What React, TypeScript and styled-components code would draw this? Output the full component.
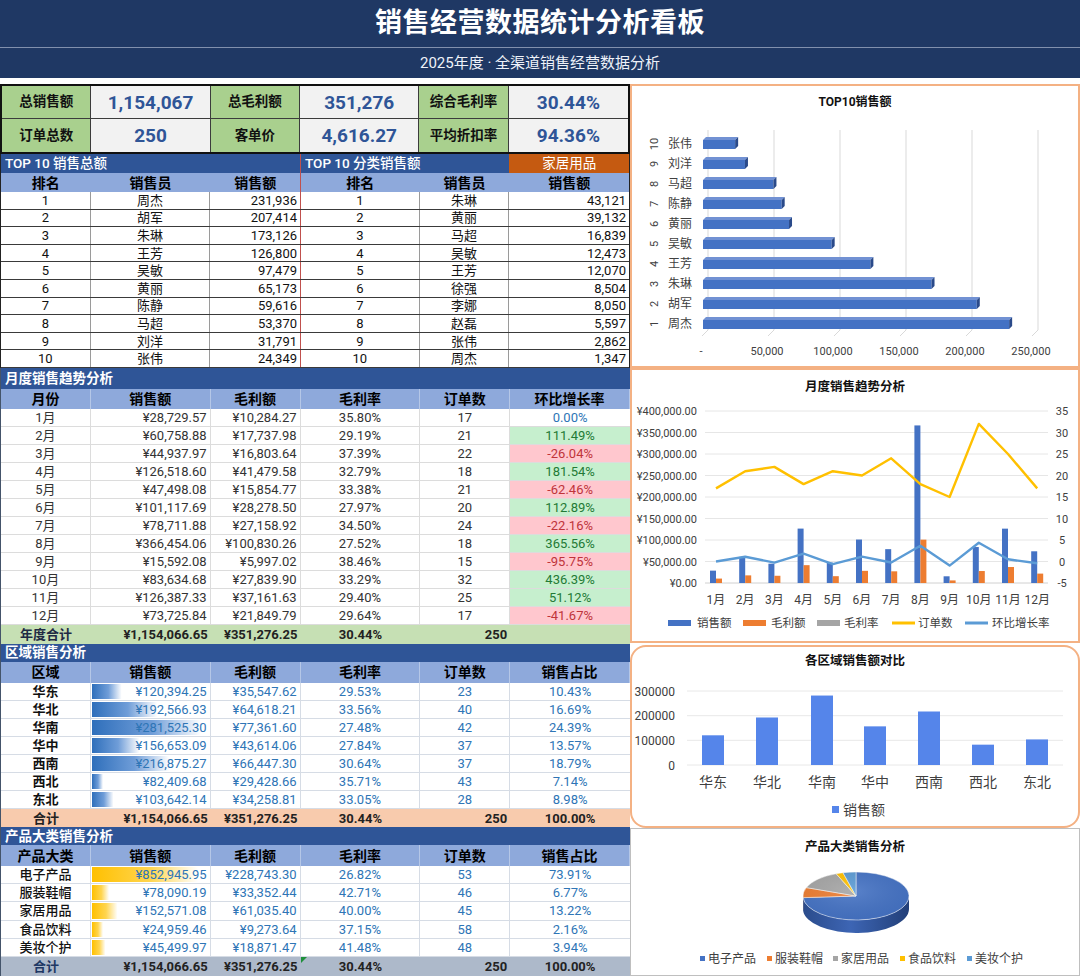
import React from "react";
import styled, { createGlobalStyle } from "styled-components";

const FONT = `Roboto, "Noto Sans CJK SC", "Noto Sans", sans-serif`;
const COLS = "90fr 120fr 90fr 120fr 90fr 120fr";

type Align = "left" | "center" | "right";
type Tone = "up" | "down" | "flat";
const JUSTIFY: Record<Align, string> = { left: "flex-start", center: "center", right: "flex-end" };

const GlobalStyle = createGlobalStyle`
  html, body { margin: 0; padding: 0; background: #ffffff; }
  body { font-family: ${FONT}; -webkit-font-smoothing: antialiased; }
  *, *::before, *::after { box-sizing: border-box; }
`;

/* ---------- page layout ---------- */
const Page = styled.div`
  width: 1080px;
  height: 976px;
  overflow: hidden;
  background: #fff;
  display: flex;
  flex-direction: column;
  font-family: ${FONT};
`;
const TitleBar = styled.header`
  flex: 0 0 48px;
  display: flex;
  align-items: center;
  justify-content: center;
  background: #1f3864;
  color: #ffffff;
  font-size: 27px;
  font-weight: 700;
  letter-spacing: 0.5px;
  line-height: 1;
  border-bottom: 1px solid #8190ad;
`;
const SubtitleBar = styled.div`
  flex: 0 0 30px;
  display: flex;
  align-items: center;
  justify-content: center;
  background: #1f3864;
  color: #eef2f9;
  font-size: 15px;
  line-height: 1;
`;
const Board = styled.main`
  flex: 1;
  min-height: 0;
  margin-top: 6px;
  display: grid;
  grid-template-columns: 630px 450px;
`;
const LeftColumn = styled.section`
  display: flex;
  flex-direction: column;
  min-width: 0;
`;
const RightColumn = styled.section`
  display: flex;
  flex-direction: column;
  min-width: 0;
`;

/* ---------- KPI ---------- */
const KpiGrid = styled.div`
  flex: 0 0 70px;
  display: grid;
  grid-template-columns: ${COLS};
  grid-template-rows: 1fr 1fr;
  border: 2px solid #111;
`;
const KpiLabel = styled.div<{ $top?: boolean }>`
  display: flex;
  align-items: center;
  justify-content: center;
  background: #a9d08e;
  color: #111;
  font-size: 13.5px;
  font-weight: 700;
  line-height: 1;
  border-right: 1px solid #3c3c3c;
  border-bottom: ${p => (p.$top ? "1px solid #3c3c3c" : "none")};
`;
const KpiValue = styled(KpiLabel)`
  background: #f2f2f2;
  color: #2f5597;
  font-size: 19px;
  &:nth-child(6n) { border-right: none; }
`;

/* ---------- tables ---------- */
const TableBlock = styled.div<{ $frame: string; $rightFrame?: string }>`
  display: flex;
  flex-direction: column;
  border-left: 1px solid ${p => p.$frame};
  border-right: ${p => (p.$rightFrame ? `1px solid ${p.$rightFrame}` : "none")};
`;
const TableRow = styled.div<{ $h: number; $bg?: string; $line?: string }>`
  flex: 0 0 ${p => p.$h}px;
  height: ${p => p.$h}px;
  display: grid;
  grid-template-columns: ${COLS};
  background: ${p => p.$bg ?? "#ffffff"};
  border-bottom: ${p => (p.$line ? `1px solid ${p.$line}` : "none")};
`;
const CellBase = styled.div<{ $align?: Align; $span?: number; $edge?: string; $lead?: string }>`
  grid-column: span ${p => p.$span ?? 1};
  min-width: 0;
  position: relative;
  display: flex;
  align-items: center;
  justify-content: ${p => JUSTIFY[p.$align ?? "center"]};
  padding: 0 ${p => (p.$align === "right" ? 3 : 4)}px;
  border-right: ${p => (p.$edge ? `1px solid ${p.$edge}` : "none")};
  border-left: ${p => (p.$lead ? `1px solid ${p.$lead}` : "none")};
  white-space: nowrap;
  line-height: 1;
`;
const BandCell = styled(CellBase)<{ $fill?: string; $weight?: number }>`
  background: ${p => p.$fill ?? "transparent"};
  color: #ffffff;
  font-size: 13.5px;
  font-weight: ${p => p.$weight ?? 700};
`;
const HeadCell = styled(CellBase)`
  color: #000;
  font-size: 14px;
  font-weight: 700;
`;
const DataCell = styled(CellBase)<{ $color?: string; $weight?: number }>`
  color: ${p => p.$color ?? "#111"};
  font-size: 13px;
  font-weight: ${p => p.$weight ?? 400};
`;
const BarCell = styled(DataCell)<{ $bar: string }>`
  background-image: linear-gradient(90deg, ${p => p.$bar});
  background-repeat: no-repeat;
  background-position: 1px center;
`;
const GrowthCell = styled(CellBase)<{ $tone: Tone }>`
  font-size: 13px;
  background: ${p => (p.$tone === "up" ? "#c6efce" : p.$tone === "down" ? "#ffc7ce" : "transparent")};
  color: ${p => (p.$tone === "up" ? "#237a35" : p.$tone === "down" ? "#c0343a" : "#2e75b6")};
`;
const TotalCell = styled(CellBase)<{ $color?: string }>`
  color: ${p => p.$color ?? "#222"};
  font-size: 13px;
  font-weight: 700;
`;
const ErrorMark = styled.span`
  position: absolute;
  top: 0;
  left: 0;
  width: 0;
  height: 0;
  border-top: 6px solid #1e8f3a;
  border-right: 6px solid transparent;
`;

/* ---------- charts ---------- */
const ChartFrame = styled.div<{ $h: number; $edge: string; $stroke?: number; $radius?: number; $gap?: number }>`
  flex: 0 0 ${p => p.$h}px;
  height: ${p => p.$h}px;
  margin-top: ${p => p.$gap ?? 0}px;
  background: #ffffff;
  border-radius: ${p => p.$radius ?? 0}px;
  box-shadow: inset 0 0 0 ${p => p.$stroke ?? 2}px ${p => p.$edge};
  overflow: hidden;
`;
const ChartSvg = styled.svg`
  display: block;
  width: 100%;
  height: 100%;
  font-family: ${FONT};
`;

/* ---------- data ---------- */
const topSales: [string, string, string][] = [
  ["1", "周杰", "231,936"], ["2", "胡军", "207,414"], ["3", "朱琳", "173,126"], ["4", "王芳", "126,800"],
  ["5", "吴敏", "97,479"], ["6", "黄丽", "65,173"], ["7", "陈静", "59,616"], ["8", "马超", "53,370"],
  ["9", "刘洋", "31,791"], ["10", "张伟", "24,349"],
];
const topCategory: [string, string, string][] = [
  ["1", "朱琳", "43,121"], ["2", "黄丽", "39,132"], ["3", "马超", "16,839"], ["4", "吴敏", "12,473"],
  ["5", "王芳", "12,070"], ["6", "徐强", "8,504"], ["7", "李娜", "8,050"], ["8", "赵磊", "5,597"],
  ["9", "张伟", "2,862"], ["10", "周杰", "1,347"],
];
const topBars: [string, number][] = [
  ["张伟", 24349], ["刘洋", 31791], ["马超", 53370], ["陈静", 59616], ["黄丽", 65173],
  ["吴敏", 97479], ["王芳", 126800], ["朱琳", 173126], ["胡军", 207414], ["周杰", 231936],
];

const mSales = [28729.57, 60758.88, 44937.97, 126518.6, 47498.08, 101117.69, 78711.88, 366454.06, 15592.08, 83634.68, 126387.33, 73725.84];
const mProfit = [10284.27, 17737.98, 16803.64, 41479.58, 15854.77, 28278.5, 27158.92, 100830.26, 5997.02, 27839.9, 37161.63, 21849.79];
const mRate = [35.8, 29.19, 37.39, 32.79, 33.38, 27.97, 34.5, 27.52, 38.46, 33.29, 29.4, 29.64];
const mOrders = [17, 21, 22, 18, 21, 20, 24, 18, 15, 32, 25, 17];
const mGrowth = [0, 111.49, -26.04, 181.54, -62.46, 112.89, -22.16, 365.56, -95.75, 436.39, 51.12, -41.67];

const regions: [string, number, number, number, number, number][] = [
  ["华东", 120394.25, 35547.62, 29.53, 23, 10.43],
  ["华北", 192566.93, 64618.21, 33.56, 40, 16.69],
  ["华南", 281525.3, 77361.6, 27.48, 42, 24.39],
  ["华中", 156653.09, 43614.06, 27.84, 37, 13.57],
  ["西南", 216875.27, 66447.3, 30.64, 37, 18.79],
  ["西北", 82409.68, 29428.66, 35.71, 43, 7.14],
  ["东北", 103642.14, 34258.81, 33.05, 28, 8.98],
];
const products: [string, number, number, number, number, number][] = [
  ["电子产品", 852945.95, 228743.3, 26.82, 53, 73.91],
  ["服装鞋帽", 78090.19, 33352.44, 42.71, 46, 6.77],
  ["家居用品", 152571.08, 61035.4, 40.0, 45, 13.22],
  ["食品饮料", 24959.46, 9273.64, 37.15, 58, 2.16],
  ["美妆个护", 45499.97, 18871.47, 41.48, 48, 3.94],
];

const money = (v: number) =>
  "¥" + v.toLocaleString("en-US", { minimumFractionDigits: 2, maximumFractionDigits: 2 });
const pct = (v: number) => v.toFixed(2) + "%";

const barWidth = (v: number, min: number, max: number, span: number) => 11 + ((v - min) * span) / (max - min);

/* ---------- left tables ---------- */
function KpiPanel() {
  const kpis: [string, string][][] = [
    [["总销售额", "1,154,067"], ["总毛利额", "351,276"], ["综合毛利率", "30.44%"]],
    [["订单总数", "250"], ["客单价", "4,616.27"], ["平均折扣率", "94.36%"]],
  ];
  return (
    <KpiGrid>
      {kpis.map((row, r) =>
        row.map(([label, value]) => (
          <React.Fragment key={label}>
            <KpiLabel $top={r === 0}>{label}</KpiLabel>
            <KpiValue $top={r === 0}>{value}</KpiValue>
          </React.Fragment>
        ))
      )}
    </KpiGrid>
  );
}

const RED = "#c0504d";

function TopTenTables() {
  return (
    <TableBlock $frame="#222" $rightFrame="#222">
      <TableRow $h={19} $bg="#2f5597">
        <BandCell $span={3} $align="left" $weight={500}>TOP 10 销售总额</BandCell>
        <BandCell $span={2} $align="left" $weight={500} $lead={RED}>TOP 10 分类销售额</BandCell>
        <BandCell $fill="#c55a11" $weight={400}>家居用品</BandCell>
      </TableRow>
      <TableRow $h={19} $bg="#8ea9db">
        <HeadCell>排名</HeadCell>
        <HeadCell>销售员</HeadCell>
        <HeadCell>销售额</HeadCell>
        <HeadCell $lead={RED}>排名</HeadCell>
        <HeadCell>销售员</HeadCell>
        <HeadCell>销售额</HeadCell>
      </TableRow>
      {topSales.map((left, i) => {
        const right = topCategory[i];
        return (
          <TableRow key={left[0]} $h={17.6} $line="#3a3a3a">
            <DataCell $edge="#9a9a9a">{left[0]}</DataCell>
            <DataCell $edge="#9a9a9a">{left[1]}</DataCell>
            <DataCell $align="right">{left[2]}</DataCell>
            <DataCell $lead={RED} $edge="#9a9a9a">{right[0]}</DataCell>
            <DataCell $edge="#9a9a9a">{right[1]}</DataCell>
            <DataCell $align="right">{right[2]}</DataCell>
          </TableRow>
        );
      })}
    </TableBlock>
  );
}

const HEAD_EDGE = "rgba(255,255,255,0.35)";

function MonthTable() {
  const heads = ["月份", "销售额", "毛利额", "毛利率", "订单数", "环比增长率"];
  return (
    <TableBlock $frame="#44546a">
      <TableRow $h={21} $bg="#2f5597">
        <BandCell $span={6} $align="left">月度销售趋势分析</BandCell>
      </TableRow>
      <TableRow $h={20} $bg="#8ea9db">
        {heads.map(h => (
          <HeadCell key={h} $edge={HEAD_EDGE}>{h}</HeadCell>
        ))}
      </TableRow>
      {mSales.map((s, i) => {
        const g = mGrowth[i];
        const tone: Tone = g > 0 ? "up" : g < 0 ? "down" : "flat";
        return (
          <TableRow key={i} $h={18} $line="#dcdcdc">
            <DataCell $color="#333" $edge="#dcdcdc">{i + 1}月</DataCell>
            <DataCell $color="#333" $edge="#dcdcdc" $align="right">{money(s)}</DataCell>
            <DataCell $color="#333" $edge="#dcdcdc" $align="right">{money(mProfit[i])}</DataCell>
            <DataCell $color="#333" $edge="#dcdcdc">{pct(mRate[i])}</DataCell>
            <DataCell $color="#333" $edge="#dcdcdc">{mOrders[i]}</DataCell>
            <GrowthCell $tone={tone}>{pct(g)}</GrowthCell>
          </TableRow>
        );
      })}
      <TableRow $h={19} $bg="#c6e0b4">
        <TotalCell $color="#1f2a44">年度合计</TotalCell>
        <TotalCell $align="right">¥1,154,066.65</TotalCell>
        <TotalCell $align="right">¥351,276.25</TotalCell>
        <TotalCell>30.44%</TotalCell>
        <TotalCell $align="right">250</TotalCell>
        <TotalCell />
      </TableRow>
    </TableBlock>
  );
}

function ShareTable(props: {
  title: string;
  first: string;
  rows: [string, number, number, number, number, number][];
  bar: string;
  barSpan: number;
  nameWeight: number;
  totalBg: string;
  totalNameColor: string;
  bandH: number;
  headH: number;
  rowH: number;
  totalH: number;
  flag?: boolean;
}) {
  const { rows } = props;
  const vals = rows.map(r => r[1]);
  const min = Math.min(...vals);
  const max = Math.max(...vals);
  const heads = [props.first, "销售额", "毛利额", "毛利率", "订单数", "销售占比"];
  const BLUE = "#2e75b6";
  const EDGE = "#d6dce5";
  return (
    <TableBlock $frame="#44546a">
      <TableRow $h={props.bandH} $bg="#2f5597">
        <BandCell $span={6} $align="left">{props.title}</BandCell>
      </TableRow>
      <TableRow $h={props.headH} $bg="#8ea9db">
        {heads.map(h => (
          <HeadCell key={h} $edge={HEAD_EDGE}>{h}</HeadCell>
        ))}
      </TableRow>
      {rows.map(r => (
        <TableRow key={r[0]} $h={props.rowH} $line={EDGE}>
          <DataCell $weight={props.nameWeight} $edge={EDGE}>{r[0]}</DataCell>
          <BarCell
            $bar={props.bar}
            $color={BLUE}
            $edge={EDGE}
            $align="right"
            style={{ backgroundSize: `${barWidth(r[1], min, max, props.barSpan).toFixed(1)}px calc(100% - 2px)` }}
          >
            {money(r[1])}
          </BarCell>
          <DataCell $color={BLUE} $edge={EDGE} $align="right">{money(r[2])}</DataCell>
          <DataCell $color={BLUE} $edge={EDGE}>{pct(r[3])}</DataCell>
          <DataCell $color={BLUE} $edge={EDGE}>{r[4]}</DataCell>
          <DataCell $color={BLUE}>{pct(r[5])}</DataCell>
        </TableRow>
      ))}
      <TableRow $h={props.totalH} $bg={props.totalBg}>
        <TotalCell $color={props.totalNameColor}>合计</TotalCell>
        <TotalCell $align="right">¥1,154,066.65</TotalCell>
        <TotalCell $align="right">¥351,276.25</TotalCell>
        <TotalCell>
          {props.flag && <ErrorMark />}
          30.44%
        </TotalCell>
        <TotalCell $align="right">250</TotalCell>
        <TotalCell>100.00%</TotalCell>
      </TableRow>
    </TableBlock>
  );
}

/* ---------- charts ---------- */
const AXIS = "#404040";

function TopTenChart() {
  const grid = [0, 1, 2, 3, 4, 5].map(k => 78 + 66 * k);
  const labels = ["-", "50,000", "100,000", "150,000", "200,000", "250,000"];
  return (
    <ChartSvg viewBox="0 0 450 284">
      <text x={225} y={22} textAnchor="middle" fontSize={12} fontWeight={700} fill="#111">TOP10销售额</text>
      {grid.map(gx => (
        <g key={gx}>
          <line x1={gx} y1={46} x2={gx} y2={246} stroke="#d9d9d9" strokeWidth={1} />
          <line x1={gx} y1={246} x2={gx - 6} y2={252} stroke="#d9d9d9" strokeWidth={1} />
        </g>
      ))}
      {labels.map((t, k) => (
        <text key={t} x={grid[k] - 7} y={271} textAnchor="middle" fontSize={11} fill={AXIS}>{t}</text>
      ))}
      {topBars.map(([name, v], i) => {
        const cy = 60 + 20 * i;
        const x0 = 73;
        const L = (v / 50000) * 66;
        return (
          <g key={name}>
            <polygon
              points={`${x0},${cy - 4} ${x0 + 3},${cy - 7} ${x0 + L + 3},${cy - 7} ${x0 + L},${cy - 4}`}
              fill="#7191d3"
            />
            <rect x={x0} y={cy - 4} width={L} height={9} fill="#4472c4" />
            <polygon
              points={`${x0 + L},${cy - 4} ${x0 + L + 3},${cy - 7} ${x0 + L + 3},${cy + 2} ${x0 + L},${cy + 5}`}
              fill="#2a4a8a"
            />
            <text x={50} y={cy + 4} textAnchor="middle" fontSize={12} fill={AXIS}>{name}</text>
            <text
              transform={`translate(24 ${cy}) rotate(-90)`}
              textAnchor="middle"
              dy={4}
              fontSize={11}
              fill={AXIS}
            >
              {10 - i}
            </text>
          </g>
        );
      })}
    </ChartSvg>
  );
}

function MonthChart() {
  const base = 215;
  const yL = (v: number) => base - (v * 172) / 400000;
  const yR = (v: number) => base - (v + 5) * 4.3;
  const cx = (i: number) => 86 + i * 29.2;
  const leftLabels = ["¥400,000.00", "¥350,000.00", "¥300,000.00", "¥250,000.00", "¥200,000.00", "¥150,000.00", "¥100,000.00", "¥50,000.00", "¥0.00"];
  const rightLabels = ["35", "30", "25", "20", "15", "10", "5", "0", "-5"];
  const orderPts = mOrders.map((v, i) => `${cx(i)},${yR(v)}`).join(" ");
  const growthPts = mGrowth.map((v, i) => `${cx(i)},${yR(v / 100)}`).join(" ");
  const legend: { label: string; color: string; kind: "bar" | "line"; sx: number; tx: number }[] = [
    { label: "销售额", color: "#4472c4", kind: "bar", sx: 38, tx: 67 },
    { label: "毛利额", color: "#ed7d31", kind: "bar", sx: 113, tx: 141 },
    { label: "毛利率", color: "#a5a5a5", kind: "bar", sx: 187, tx: 214 },
    { label: "订单数", color: "#ffc000", kind: "line", sx: 262, tx: 288 },
    { label: "环比增长率", color: "#5b9bd5", kind: "line", sx: 335, tx: 362 },
  ];
  return (
    <ChartSvg viewBox="0 0 450 275">
      <text x={225} y={23} textAnchor="middle" fontSize={12.5} fontWeight={700} fill="#111">月度销售趋势分析</text>
      {leftLabels.map((t, k) => {
        const y = 43 + 21.5 * k;
        return (
          <g key={t}>
            <line x1={75} y1={y} x2={418} y2={y} stroke={k === 8 ? "#d0d0d0" : "#e6e6e6"} strokeWidth={1} />
            <text x={67} y={y + 4} textAnchor="end" fontSize={11} fill={AXIS}>{t}</text>
            <text x={432} y={y + 4} textAnchor="middle" fontSize={11} fill={AXIS}>{rightLabels[k]}</text>
          </g>
        );
      })}
      {mSales.map((s, i) => (
        <g key={i}>
          <rect x={cx(i) - 6} y={yL(s)} width={6} height={base - yL(s)} fill="#4472c4" />
          <rect x={cx(i)} y={yL(mProfit[i])} width={6} height={base - yL(mProfit[i])} fill="#ed7d31" />
          <text x={cx(i)} y={236} textAnchor="middle" fontSize={12} fill={AXIS}>{i + 1}月</text>
        </g>
      ))}
      <polyline points={orderPts} fill="none" stroke="#ffc000" strokeWidth={2.4} strokeLinejoin="round" />
      <polyline points={growthPts} fill="none" stroke="#5b9bd5" strokeWidth={2.4} strokeLinejoin="round" />
      {legend.map(l => (
        <g key={l.label}>
          {l.kind === "bar" ? (
            <rect x={l.sx} y={252} width={23} height={6} fill={l.color} />
          ) : (
            <line x1={l.sx} y1={255} x2={l.sx + 23} y2={255} stroke={l.color} strokeWidth={3} />
          )}
          <text x={l.tx} y={259} fontSize={11.5} fill={AXIS}>{l.label}</text>
        </g>
      ))}
    </ChartSvg>
  );
}

function RegionChart() {
  const centers = [83, 137, 192, 245, 299, 353, 407];
  const y = (v: number) => 120 - (v * 24.67) / 100000;
  const ticks: [string, number][] = [["300000", 46], ["200000", 70.7], ["100000", 95.3], ["0", 120]];
  return (
    <ChartSvg viewBox="0 0 450 183">
      <text x={225} y={20} textAnchor="middle" fontSize={12.5} fontWeight={700} fill="#111">各区域销售额对比</text>
      {ticks.map(([t, ty]) => (
        <g key={t}>
          <line x1={57} y1={ty} x2={433} y2={ty} stroke="#e8e8e8" strokeWidth={1} />
          <text x={45} y={ty + 4.5} textAnchor="end" fontSize={12} fill={AXIS}>{t}</text>
        </g>
      ))}
      {regions.map((r, i) => (
        <g key={r[0]}>
          <rect x={centers[i] - 11} y={y(r[1])} width={22} height={120 - y(r[1])} fill="#5585ea" />
          <text x={centers[i]} y={142} textAnchor="middle" fontSize={14} fill={AXIS}>{r[0]}</text>
        </g>
      ))}
      <rect x={202} y={161} width={7} height={7} fill="#5585ea" />
      <text x={213} y={169.5} fontSize={14} fill={AXIS}>销售额</text>
    </ChartSvg>
  );
}

function PieChart() {
  const cx = 226;
  const cy = 68;
  const rx = 53;
  const ry = 24;
  const depth = 13;
  const colors = ["#4472c4", "#ed7d31", "#a5a5a5", "#ffc000", "#5b9bd5"];
  const sides = ["url(#sideBlue)", "#b45a1f", "#7c7c7c", "#c99600", "#3f78ab"];
  const pt = (deg: number, dy = 0): [number, number] => {
    const r = (deg * Math.PI) / 180;
    return [cx + rx * Math.sin(r), cy - ry * Math.cos(r) + dy];
  };
  let acc = 0;
  const slices = products.map((p, i) => {
    const a0 = acc;
    const a1 = acc + (p[5] / 100) * 360;
    acc = a1;
    return { a0, a1, color: colors[i], side: sides[i], name: p[0] };
  });
  const legendX = [70, 137, 203, 270, 337];
  return (
    <ChartSvg viewBox="0 0 450 148">
      <defs>
        <linearGradient id="sideBlue" x1="0" x2="1" y1="0" y2="0">
          <stop offset="0%" stopColor="#2b4c8c" />
          <stop offset="45%" stopColor="#3d65b4" />
          <stop offset="100%" stopColor="#223f78" />
        </linearGradient>
        <radialGradient id="topShade" cx="0.45" cy="0.4" r="0.7">
          <stop offset="0%" stopColor="#ffffff" stopOpacity={0.12} />
          <stop offset="100%" stopColor="#000000" stopOpacity={0.05} />
        </radialGradient>
      </defs>
      <text x={225} y={23} textAnchor="middle" fontSize={12.5} fontWeight={700} fill="#111">产品大类销售分析</text>
      {slices.map(s => {
        const lo = Math.max(s.a0, 90);
        const hi = Math.min(s.a1, 270);
        if (hi <= lo) return null;
        const [x1, y1] = pt(lo);
        const [x2, y2] = pt(hi);
        const [x3, y3] = pt(hi, depth);
        const [x4, y4] = pt(lo, depth);
        return (
          <path
            key={"side" + s.name}
            d={`M${x1},${y1} A${rx},${ry} 0 0 1 ${x2},${y2} L${x3},${y3} A${rx},${ry} 0 0 0 ${x4},${y4} Z`}
            fill={s.side}
          />
        );
      })}
      {slices.map(s => {
        const [x1, y1] = pt(s.a0);
        const [x2, y2] = pt(s.a1);
        const large = s.a1 - s.a0 > 180 ? 1 : 0;
        return (
          <path
            key={s.name}
            d={`M${cx},${cy} L${x1},${y1} A${rx},${ry} 0 ${large} 1 ${x2},${y2} Z`}
            fill={s.color}
            stroke="#ffffff"
            strokeWidth={0.5}
          />
        );
      })}
      <ellipse cx={cx} cy={cy} rx={rx} ry={ry} fill="url(#topShade)" />
      {slices.map((s, i) => (
        <g key={"lg" + s.name}>
          <rect x={legendX[i]} y={128} width={5} height={5} fill={s.color} />
          <text x={legendX[i] + 8} y={135} fontSize={12} fill={AXIS}>{s.name}</text>
        </g>
      ))}
    </ChartSvg>
  );
}

export default function App() {
  return (
    <>
      <GlobalStyle />
      <Page>
        <TitleBar>销售经营数据统计分析看板</TitleBar>
        <SubtitleBar>2025年度 · 全渠道销售经营数据分析</SubtitleBar>
        <Board>
          <LeftColumn>
            <KpiPanel />
            <TopTenTables />
            <MonthTable />
            <ShareTable
              title="区域销售分析"
              first="区域"
              rows={regions}
              bar="#2f6fbb 0%, #6f9dd8 55%, #ffffff 100%"
              barSpan={98}
              nameWeight={700}
              totalBg="#f8cbad"
              totalNameColor="#222"
              bandH={18}
              headH={21}
              rowH={18}
              totalH={18.5}
            />
            <ShareTable
              title="产品大类销售分析"
              first="产品大类"
              rows={products}
              bar="#ffc000 0%, #ffd54f 55%, #ffffff 100%"
              barSpan={95}
              nameWeight={500}
              totalBg="#adb9ca"
              totalNameColor="#1f3864"
              bandH={18}
              headH={20.5}
              rowH={18.2}
              totalH={19}
              flag
            />
          </LeftColumn>
          <RightColumn>
            <ChartFrame $h={284} $edge="#f4b183">
              <TopTenChart />
            </ChartFrame>
            <ChartFrame $h={275} $edge="#f4b183">
              <MonthChart />
            </ChartFrame>
            <ChartFrame $h={183} $edge="#f4b183" $radius={16} $gap={2}>
              <RegionChart />
            </ChartFrame>
            <ChartFrame $h={148} $edge="#bfbfbf" $stroke={1}>
              <PieChart />
            </ChartFrame>
          </RightColumn>
        </Board>
      </Page>
    </>
  );
}
